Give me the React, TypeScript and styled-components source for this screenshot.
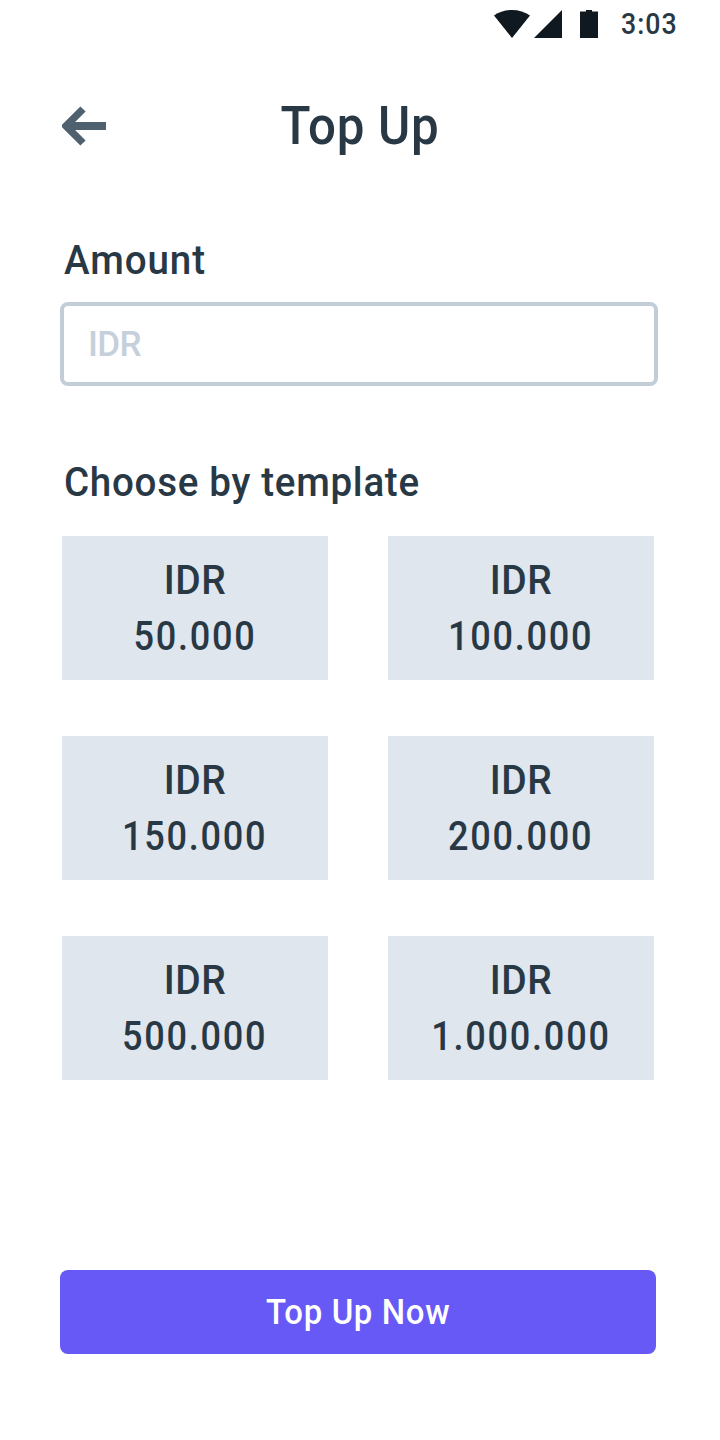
import React from "react";
import styled, { createGlobalStyle } from "styled-components";

const color = {
  ink: "#293845",
  icon: "#4f606f",
  status: "#101820",
  line: "#c3cdd8",
  card: "#dfe6ed",
  primary: "#6759f5",
  page: "#ffffff",
};

const GlobalStyle = createGlobalStyle`
  *, *::before, *::after { box-sizing: border-box; }
  body {
    margin: 0;
    background: ${color.page};
    color: ${color.ink};
    font-family: Roboto, "Liberation Sans", sans-serif;
    font-weight: 500;
  }
  button, input { font: inherit; color: inherit; }
`;

const Screen = styled.main`
  display: flex;
  flex-direction: column;
  width: 720px;
  height: 1440px;
  background: ${color.page};
`;

const StatusBar = styled.div`
  display: flex;
  justify-content: flex-end;
  align-items: center;
  height: 48px;
  padding-right: 42px;
`;

const StatusIcons = styled.svg`
  display: block;
  width: 104px;
  height: 28px;
  margin-right: 23px;
  fill: ${color.status};
`;

const Clock = styled.time`
  width: 57px;
  white-space: nowrap;
  font-size: 29px;
  line-height: 48px;
  letter-spacing: 1.1px;
  transform: scaleX(0.92);
  transform-origin: left;
`;

const Header = styled.header`
  display: grid;
  grid-template-columns: 46px 1fr 46px;
  align-items: center;
  height: 80px;
  margin-top: 38px;
  padding: 0 62px;
`;

const BackButton = styled.button`
  display: flex;
  padding: 0;
  border: 0;
  background: none;
`;

const Title = styled.h1`
  margin: 0;
  text-align: center;
  font-size: 53px;
  font-weight: 500;
  line-height: 80px;
  letter-spacing: 0.8px;
  transform: scaleX(0.93);
`;

const Form = styled.form`
  display: flex;
  flex-direction: column;
  padding: 66px 62px 0 60px;
`;

const Label = styled.label`
  margin-left: 4px;
  font-size: 41px;
  line-height: 56px;
  letter-spacing: 1px;
  transform: scaleX(0.94);
  transform-origin: left;
`;

const AmountInput = styled.input`
  width: 598px;
  height: 84px;
  margin-top: 14px;
  padding: 0 24px;
  border: 4px solid ${color.line};
  border-radius: 8px;
  background: #fff;
  outline: 0;
  font-size: 35px;
  letter-spacing: -0.6px;
  &::placeholder { color: #c5d0db; opacity: 1; }
`;

const TemplateTitle = styled.h2`
  margin: 68px 0 0 4px;
  font-size: 41px;
  font-weight: 500;
  line-height: 56px;
  letter-spacing: 0.75px;
  white-space: nowrap;
  transform: scaleX(0.94);
  transform-origin: left;
`;

const Templates = styled.div`
  display: grid;
  grid-template-columns: repeat(2, 266px);
  column-gap: 60px;
  row-gap: 56px;
  margin-top: 26px;
  padding-left: 2px;
`;

const Template = styled.button`
  display: flex;
  flex-direction: column;
  align-items: center;
  height: 144px;
  padding: 16px 0;
  border: 0;
  background: ${color.card};
  font-size: 41px;
  line-height: 56px;
`;

const Currency = styled.span`
  padding-right: 1px;
  letter-spacing: 0.6px;
  transform: scaleX(0.95);
`;

const Value = styled.span`
  letter-spacing: 2px;
  transform: scaleX(0.88);
`;

const Submit = styled.button`
  width: 596px;
  height: 84px;
  margin-top: 190px;
  border: 0;
  border-radius: 8px;
  background: ${color.primary};
  color: #fff;
  font-size: 35px;
`;

const SubmitText = styled.span`
  display: inline-block;
  letter-spacing: 0.7px;
  transform: scaleX(0.94);
`;

const amounts = ["50.000", "100.000", "150.000", "200.000", "500.000", "1.000.000"];

export default function App() {
  return (
    <>
      <GlobalStyle />
      <Screen>
        <StatusBar>
          <StatusIcons viewBox="494 10 104 28" aria-hidden="true">
            <path d="M494 15.6C499 12 505.300 10 512 10s13 2 18 5.600L512 38z" />
            <path d="M562 10v28h-28z" />
            <path d="M580 11.500h6V10h6v1.500h6V38h-18z" />
          </StatusIcons>
          <Clock>3:03</Clock>
        </StatusBar>
        <Header>
          <BackButton type="button" aria-label="Back">
            <svg width="44" height="40" viewBox="0 0 44 40" fill="none" stroke={color.icon}>
              <path d="M4 20h40" strokeWidth="8" />
              <path d="M21 3 4 20l17 17" strokeWidth="7.400" />
            </svg>
          </BackButton>
          <Title>Top Up</Title>
        </Header>
        <Form onSubmit={(e) => e.preventDefault()}>
          <Label htmlFor="amount">Amount</Label>
          <AmountInput id="amount" placeholder="IDR" inputMode="numeric" />
          <TemplateTitle>Choose by template</TemplateTitle>
          <Templates>
            {amounts.map((amount) => (
              <Template key={amount} type="button">
                <Currency>IDR</Currency>
                <Value>{amount}</Value>
              </Template>
            ))}
          </Templates>
          <Submit type="submit">
            <SubmitText>Top Up Now</SubmitText>
          </Submit>
        </Form>
      </Screen>
    </>
  );
}
